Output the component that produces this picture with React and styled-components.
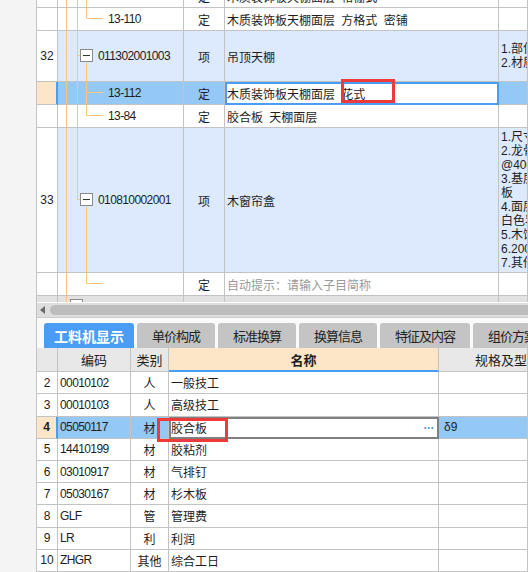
import React from 'react';
import styled, { createGlobalStyle } from 'styled-components';

const GRID = '#c3c3c3';
const TREE = '#fdc777';
const ACCENT = '#4a9df5';
const ROW_BLUE = '#dde9fc';
const SEL_BLUE = '#94c8f5';
const PEACH = '#fde5c8';

const GlobalStyle = createGlobalStyle`
  html, body {
    margin: 0;
    padding: 0;
    height: 572px;
    overflow: hidden;
    background: #f4f4f4;
  }
  body {
    font-family: "Liberation Sans", "Noto Sans CJK SC", sans-serif;
    font-size: 12px;
    color: #1e1e1e;
  }
`;

const Page = styled.div`
  display: flex;
  width: 528px;
  height: 572px;
  overflow: hidden;
`;

const SideStrip = styled.div`
  width: 36px;
  flex-shrink: 0;
  background: #f4f4f4;
  border-right: 1px solid ${GRID};
`;

const Main = styled.div`
  flex: 1;
  min-width: 0;
  display: flex;
  flex-direction: column;
  background: #fff;
`;

const UpperPane = styled.div`
  height: 302px;
  flex-shrink: 0;
  overflow: hidden;
`;

const UpperRow = styled.div`
  display: grid;
  grid-template-columns: 21px 126px 41px 274px 1fr;
  height: ${p => p.$h}px;
  margin-top: ${p => p.$offset || 0}px;
`;

const LowerRow = styled.div`
  display: grid;
  grid-template-columns: 21px 73px 38px 270px 1fr;
  height: ${p => p.$h || 23}px;
`;

const Cell = styled.div`
  box-sizing: border-box;
  min-width: 0;
  display: flex;
  align-items: center;
  justify-content: ${p => (p.$center ? 'center' : 'flex-start')};
  padding-left: ${p => p.$pad || 0}px;
  border-right: 1px solid ${GRID};
  border-bottom: 1px solid ${GRID};
  background: ${p => p.$bg || 'transparent'};
  color: ${p => p.$muted ? '#9a9a9a' : 'inherit'};
  white-space: nowrap;
  word-spacing: 3px;
  overflow: hidden;
`;

const NumCell = styled(Cell)`
  justify-content: center;
  font-weight: ${p => (p.$active ? 'bold' : 'normal')};
  background: ${p => (p.$active ? PEACH : p.$bg || 'transparent')};
  border-right: ${p => (p.$active ? `2px solid ${ACCENT}` : `1px solid ${GRID}`)};
`;

const CodeText = styled.span`
  letter-spacing: -0.6px;
`;

const EditCell = styled(Cell)`
  position: relative;
  overflow: visible;
  background: #fff;
  border: 2px solid ${p => p.$frame};
`;

const RedMark = styled.div`
  position: absolute;
  left: ${p => p.$x}px;
  top: ${p => p.$y}px;
  width: ${p => p.$w}px;
  height: ${p => p.$h}px;
  box-sizing: border-box;
  border: 3px solid #ee3a3a;
  pointer-events: none;
`;

const MoreDots = styled.span`
  margin-left: auto;
  margin-right: 3px;
  color: #4d9bd6;
  font-weight: bold;
  letter-spacing: -0.5px;
`;

const DescCell = styled(Cell)`
  flex-direction: column;
  align-items: flex-start;
  justify-content: center;
  line-height: 14px;
`;

const TreeArt = styled.svg`
  display: block;
  flex-shrink: 0;
`;

const ScrollBar = styled.div`
  height: 14px;
  flex-shrink: 0;
  display: flex;
  align-items: center;
  background: #dedede;
  border-top: 1px solid #fff;
  border-bottom: 1px solid #cdcdcd;
`;

const ScrollArrow = styled.svg`
  margin: 0 5px 0 3px;
  flex-shrink: 0;
`;

const ScrollThumb = styled.div`
  flex: 1;
  height: 10px;
  background: #bdbdbd;
  border-radius: 5px 0 0 5px;
`;

const TabBar = styled.div`
  height: 30px;
  flex-shrink: 0;
  box-sizing: border-box;
  padding: 5px 0 0 7px;
  display: flex;
  gap: 3px;
  background: #fafafa;
  overflow: hidden;
`;

const Tab = styled.div`
  flex-shrink: 0;
  height: 25px;
  box-sizing: border-box;
  padding: 0 ${p => (p.$active ? 10 : 15)}px;
  display: flex;
  align-items: center;
  border-radius: 3px 3px 0 0;
  background: ${p => (p.$active ? ACCENT : '#c4c4c4')};
  color: ${p => (p.$active ? '#fff' : '#222')};
  font-family: "Noto Sans CJK SC", sans-serif;
  font-size: ${p => (p.$active ? 14 : 13)}px;
  font-weight: ${p => (p.$active ? 'bold' : 'normal')};
  letter-spacing: ${p => (p.$active ? 0 : -1)}px;
`;

const HeadCell = styled(Cell)`
  background: ${p => (p.$hot ? PEACH : '#e8e8e8')};
  font-weight: ${p => (p.$hot ? 'bold' : 'normal')};
  font-size: 13px;
  border-bottom: ${p => (p.$hot ? `2px solid ${ACCENT}` : `1px solid ${GRID}`)};
`;

function TreeLines({ h, w, g2, node, box, nextBox }) {
  const ch = h - 1;
  const mid = Math.round(ch / 2) - 0.5;
  return (
    <TreeArt width={w} height={ch} viewBox={`0 0 ${w} ${ch}`} fill="none">
      <line x1="8.5" y1="0" x2="8.5" y2={ch} stroke={TREE} />
      {g2 === 'full' && <line x1="19.5" y1="0" x2="19.5" y2={ch} stroke={TREE} />}
      {g2 === 'mid' && <path d={`M19.5 0 V${mid} H22`} stroke={TREE} />}
      {box && (
        <>
          <path d={`M19.5 ${mid} H22 M28.5 ${mid + 6} V${ch}`} stroke={TREE} />
          <rect x="22.5" y={mid - 6} width="12" height="12" fill="#fff" stroke="#8a8a8a" />
          <line x1="25" y1={mid} x2="32" y2={mid} stroke="#333" />
        </>
      )}
      {node === 'full' && <line x1="28.5" y1="0" x2="28.5" y2={ch} stroke={TREE} />}
      {node === 'mid' && <path d={`M28.5 0 V${mid}`} stroke={TREE} />}
      {node && <line x1="28.5" y1={mid} x2="45" y2={mid} stroke={TREE} />}
      {nextBox && (
        <>
          <path d="M8.5 9.5 H12" stroke={TREE} />
          <rect x="12.5" y="3.5" width="12" height="12" fill="#fff" stroke="#8a8a8a" />
        </>
      )}
    </TreeArt>
  );
}

const upperRows = [
  { h: 23, offset: -15, code: '', type: '定', name: '木质装饰板天棚面层 格栅式', tree: { g2: 'full', node: 'full' } },
  { h: 23, code: '13-110', type: '定', name: '木质装饰板天棚面层 方格式 密铺', tree: { g2: 'full', node: 'mid' } },
  {
    h: 51, num: '32', code: '011302001003', type: '项', name: '吊顶天棚', item: true,
    tree: { g2: 'full', box: true },
    desc: ['1.部位：吊顶', '2.材质：木质'],
  },
  { h: 23, code: '13-112', type: '定', name: '木质装饰板天棚面层 花式', selected: true, tree: { g2: 'full', node: 'full' } },
  { h: 23, code: '13-84', type: '定', name: '胶合板 天棚面层', tree: { g2: 'full', node: 'mid' } },
  {
    h: 145, num: '33', code: '010810002001', type: '项', name: '木窗帘盒', item: true,
    tree: { g2: 'mid', box: true },
    desc: ['1.尺寸：详见图纸', '2.龙骨材料种类：木龙骨', '@400', '3.基层材料：胶合', '板', '4.面层材料：', '白色乳胶漆', '5.木饰面', '6.200', '7.其他'],
  },
  { h: 23, code: '', type: '定', name: '自动提示：请输入子目简称', hint: true, tree: { node: 'mid' } },
  { h: 23, code: '', type: '', name: '', grey: true, tree: { nextBox: true } },
];

const materials = [
  ['2', '00010102', '人', '一般技工'],
  ['3', '00010103', '人', '高级技工'],
  ['4', '05050117', '材', '胶合板', 'δ9'],
  ['5', '14410199', '材', '胶粘剂'],
  ['6', '03010917', '材', '气排钉'],
  ['7', '05030167', '材', '杉木板'],
  ['8', 'GLF', '管', '管理费'],
  ['9', 'LR', '利', '利润'],
  ['10', 'ZHGR', '其他', '综合工日'],
];

const tabs = ['工料机显示', '单价构成', '标准换算', '换算信息', '特征及内容', '组价方案'];

function UpperLine({ row }) {
  const bg = row.item ? ROW_BLUE : row.grey ? '#e2e2e2' : undefined;
  const sel = row.selected ? SEL_BLUE : bg;
  return (
    <UpperRow $h={row.h} $offset={row.offset}>
      <NumCell $active={row.selected} $bg={row.grey ? '#e2e2e2' : undefined}>{row.num}</NumCell>
      <Cell $bg={sel}>
        <TreeLines h={row.h} w={row.item ? 40 : 50} {...row.tree} />
        <CodeText>{row.code}</CodeText>
      </Cell>
      <Cell $bg={sel} $center>{row.type}</Cell>
      {row.selected ? (
        <EditCell $frame={ACCENT}>
          {row.name}
          <RedMark $x={114} $y={-5} $w={54} $h={24} />
        </EditCell>
      ) : (
        <Cell $bg={bg} $pad={2} $muted={row.hint}>{row.name}</Cell>
      )}
      <DescCell $bg={sel} $pad={2}>
        {(row.desc || []).map((d, i) => <div key={i}>{d}</div>)}
      </DescCell>
    </UpperRow>
  );
}

function MaterialLine({ item }) {
  const [num, code, kind, name, spec] = item;
  const active = !!spec;
  const bg = active ? SEL_BLUE : undefined;
  return (
    <LowerRow>
      <NumCell $active={active}>{num}</NumCell>
      <Cell $bg={bg} $pad={2}><CodeText>{code}</CodeText></Cell>
      <Cell $bg={bg} $center>{kind}</Cell>
      {active ? (
        <EditCell $frame="#808080">
          {name}
          <MoreDots>···</MoreDots>
          <RedMark $x={-14} $y={-1} $w={71} $h={24} />
        </EditCell>
      ) : (
        <Cell $pad={2}>{name}</Cell>
      )}
      <Cell $bg={bg} $pad={5}>{spec}</Cell>
    </LowerRow>
  );
}

export default function App() {
  return (
    <Page>
      <GlobalStyle />
      <SideStrip />
      <Main>
        <UpperPane>
          {upperRows.map((row, i) => <UpperLine key={i} row={row} />)}
        </UpperPane>
        <ScrollBar>
          <ScrollArrow width="5" height="8" viewBox="0 0 5 8">
            <path d="M5 0 L0 4 L5 8 Z" fill="#6a6a6a" />
          </ScrollArrow>
          <ScrollThumb />
        </ScrollBar>
        <TabBar>
          {tabs.map((t, i) => <Tab key={t} $active={i === 0}>{t}</Tab>)}
        </TabBar>
        <LowerRow $h={25}>
          <HeadCell />
          <HeadCell $center>编码</HeadCell>
          <HeadCell $center>类别</HeadCell>
          <HeadCell $center $hot>名称</HeadCell>
          <HeadCell $pad={36}>规格及型号</HeadCell>
        </LowerRow>
        {materials.map(m => <MaterialLine key={m[0]} item={m} />)}
      </Main>
    </Page>
  );
}
